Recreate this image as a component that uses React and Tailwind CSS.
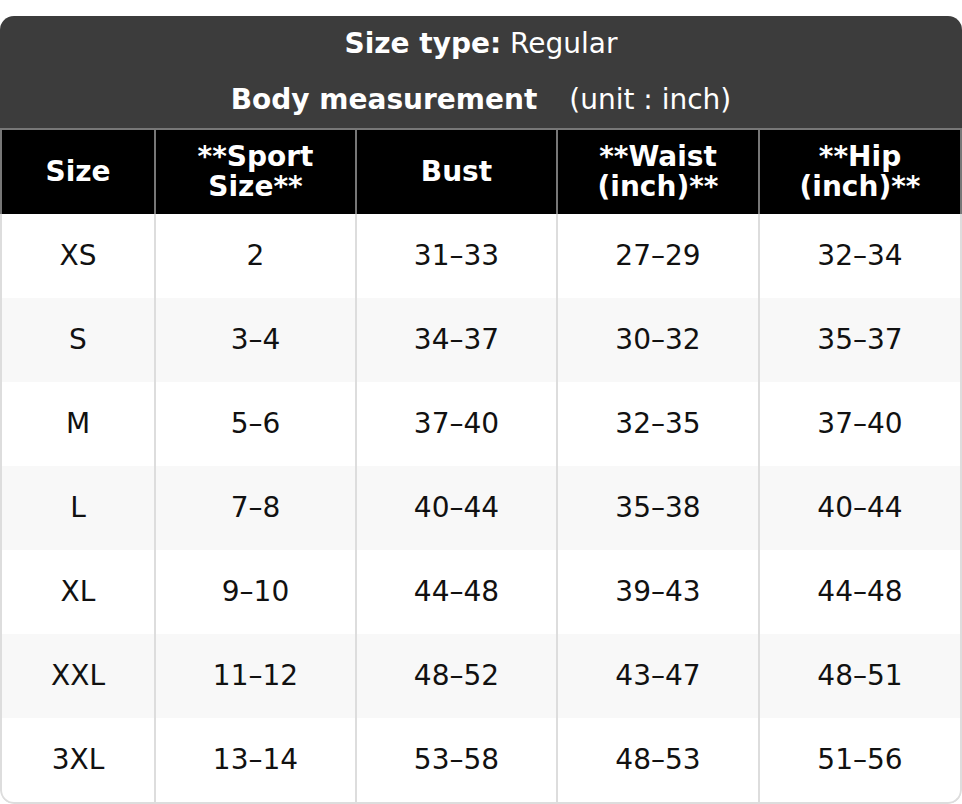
import React from "react";

const rows = [
  ["XS", "2", "31–33", "27–29", "32–34"],
  ["S", "3–4", "34–37", "30–32", "35–37"],
  ["M", "5–6", "37–40", "32–35", "37–40"],
  ["L", "7–8", "40–44", "35–38", "40–44"],
  ["XL", "9–10", "44–48", "39–43", "44–48"],
  ["XXL", "11–12", "48–52", "43–47", "48–51"],
  ["3XL", "13–14", "53–58", "48–53", "51–56"],
];

export default function App() {
  return (
    <div className="w-[962px] bg-white pt-4 text-[28px] font-['DejaVu_Sans',sans-serif]">
      <div className="rounded-[14px] overflow-hidden">
        <div className="bg-[#3c3c3c] text-white">
          <div className="h-[56px] flex items-center justify-center">
            <span className="font-bold">Size type:</span>
            <span>&nbsp;Regular</span>
          </div>
          <div className="h-[56px] flex items-center justify-center">
            <span className="font-bold">Body measurement</span>
            <span className="ml-[32px]">(unit : inch)</span>
          </div>
        </div>
        <div className="flex border-x-2 border-t-2 border-[#777] bg-black text-white font-bold leading-[30px] h-[86px]">
          <div className="w-[152px] flex-none flex items-center justify-center text-center">Size</div>
          <div className="w-[201px] flex-none border-l-2 border-[#777] flex items-center justify-center text-center">**Sport<br />Size**</div>
          <div className="w-[201px] flex-none border-l-2 border-[#777] flex items-center justify-center text-center">Bust</div>
          <div className="w-[202px] flex-none border-l-2 border-[#777] flex items-center justify-center text-center">**Waist<br />(inch)**</div>
          <div className="w-[202px] flex-none border-l-2 border-[#777] flex items-center justify-center text-center">**Hip<br />(inch)**</div>
        </div>
        {rows.map((r, i) => (
          <div
            key={i}
            className={
              "flex border-x-2 border-[#ddd] text-[#111] " +
              (i % 2 === 1 ? "bg-[#f8f8f8] " : "bg-white ") +
              (i === rows.length - 1 ? "h-[86px] border-b-2 rounded-b-[14px]" : "h-[84px]")
            }
          >
            <div className="w-[152px] flex-none flex items-center justify-center">{r[0]}</div>
            <div className="w-[201px] flex-none border-l-2 border-[#ddd] flex items-center justify-center">{r[1]}</div>
            <div className="w-[201px] flex-none border-l-2 border-[#ddd] flex items-center justify-center">{r[2]}</div>
            <div className="w-[202px] flex-none border-l-2 border-[#ddd] flex items-center justify-center">{r[3]}</div>
            <div className="w-[202px] flex-none border-l-2 border-[#ddd] flex items-center justify-center">{r[4]}</div>
          </div>
        ))}
      </div>
    </div>
  );
}
